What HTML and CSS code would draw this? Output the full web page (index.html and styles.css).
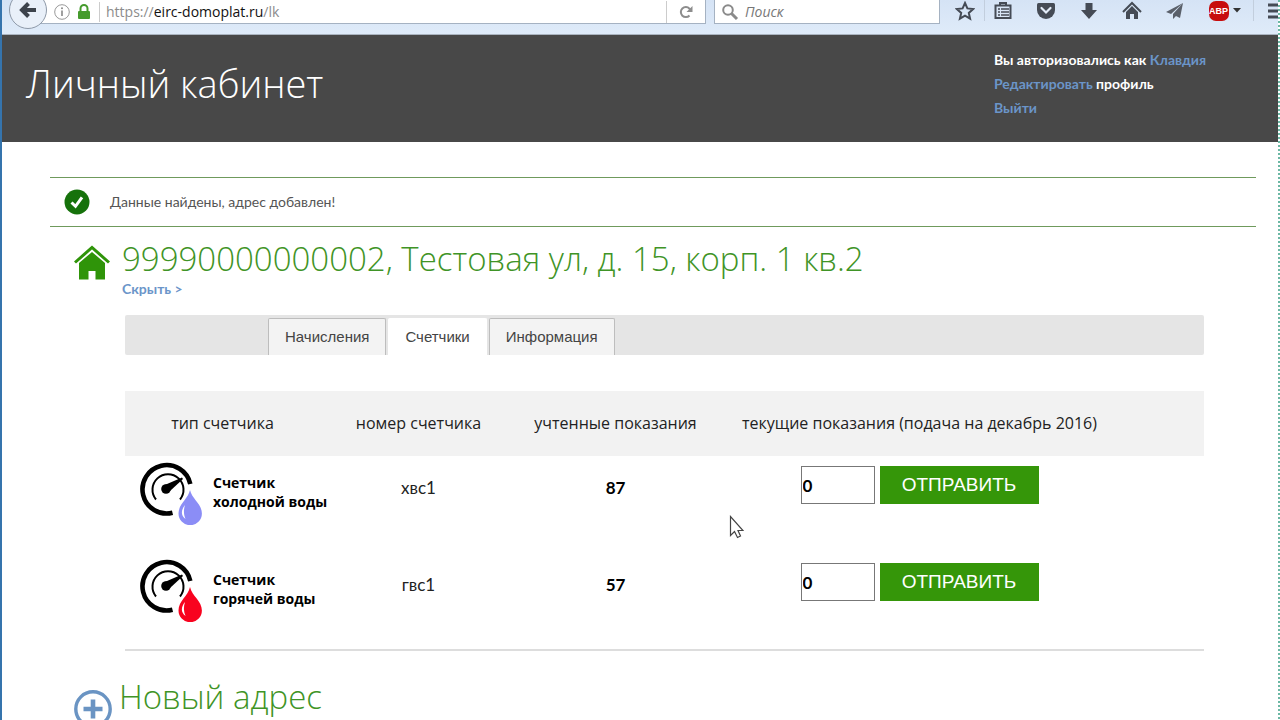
FILE: index.html
```html
<!DOCTYPE html>
<html lang="ru">
<head>
<meta charset="utf-8">
<title>Личный кабинет</title>
<link rel="stylesheet" href="styles.css">
</head>
<body>
<div class="window">
  <div class="toolbar">
    <button class="back" type="button" aria-label="Назад">
      <svg width="20" height="20" viewBox="0 0 20 20"><path d="M18 10H5M10.500 3.500L4 10l6.500 6.500" fill="none" stroke="#3d434c" stroke-width="4"/></svg>
    </button>
    <div class="urlbar">
      <svg width="16" height="16" viewBox="0 0 16 16"><circle cx="8" cy="8" r="7.300" fill="none" stroke="#999"/><path d="M8 6.500V12" stroke="#888" stroke-width="1.600"/><circle cx="8" cy="4.300" r="1" fill="#888"/></svg>
      <svg class="lock" width="14" height="16" viewBox="0 0 14 16"><path d="M3.500 8V4.500a3.500 3.500 0 0 1 7 0V8" fill="none" stroke="#469b2d" stroke-width="2"/><rect x="1" y="7" width="12" height="8" rx="1" fill="#469b2d"/></svg>
      <div class="url">https://<span class="host">eirc-domoplat.ru</span>/lk</div>
      <button class="reload" type="button" aria-label="Обновить">
        <svg width="16" height="16" viewBox="0 0 16 16"><path d="M11.500 11.500A5 5 0 1 1 11.500 4.700L13 6.500" fill="none" stroke="#8d8d8d" stroke-width="2"/><path d="M14.500 2v6h-6z" fill="#8d8d8d"/></svg>
      </button>
    </div>
    <label class="search">
      <svg width="18" height="18" viewBox="0 0 18 18"><circle cx="7" cy="7" r="4.800" fill="none" stroke="#8a8a8a" stroke-width="2"/><path d="M10.500 10.500L16 16" stroke="#8a8a8a" stroke-width="3"/></svg>
      <input type="text" placeholder="Поиск" aria-label="Поиск">
    </label>
    <div class="tools">
      <button type="button" class="tool star" aria-label="Закладка"><svg width="20" height="20" viewBox="0 0 20 20"><path d="M10 2l2.400 5.400 5.800.6-4.400 3.900 1.300 5.800L10 14.700l-5.100 3 1.300-5.800L1.800 8l5.800-.6z" fill="none" stroke="#454b55" stroke-width="2"/></svg></button>
      <button type="button" class="tool" aria-label="Список закладок"><svg width="20" height="20" viewBox="0 0 20 20"><path d="M7 4V2h6v2M2.500 4.500h15v12.500h-15z" fill="none" stroke="#454b55" stroke-width="2"/><path d="M5 8h2M8 8h8M5 11h2M8 11h8M5 14h2M8 14h8" stroke="#454b55" stroke-width="1.500"/></svg></button>
      <button type="button" class="tool" aria-label="Pocket"><svg width="20" height="20" viewBox="0 0 20 20"><path d="M1 3.500Q1 2 2.500 2h15Q19 2 19 3.500V9a9 9 0 0 1-18 0z" fill="#454b55"/><path d="M5.500 7l4.500 4.500L14.500 7" fill="none" stroke="#e3ecf8" stroke-width="2.200" stroke-linecap="round"/></svg></button>
      <button type="button" class="tool" aria-label="Загрузки"><svg width="20" height="20" viewBox="0 0 20 20"><path d="M6.500 2h7v7H18l-8 9-8-9h4.500z" fill="#454b55"/></svg></button>
      <button type="button" class="tool" aria-label="Домой"><svg width="20" height="20" viewBox="0 0 20 20"><path d="M1 11l9-9 9 9" fill="none" stroke="#454b55" stroke-width="2"/><path d="M4 11l6-6 6 6v7h-4v-5H8v5H4z" fill="#454b55"/></svg></button>
      <button type="button" class="tool" aria-label="Отправить ссылку"><svg width="20" height="20" viewBox="0 0 20 20"><path d="M18 2L1 11l5 2zM18 2L8 13v5l3-3 4 2z" fill="#5a606a"/></svg></button>
      <button type="button" class="tool abp" aria-label="Adblock Plus"><span class="abp-sign">ABP</span><svg width="8" height="5" viewBox="0 0 8 5"><path d="M0 0h8L4 4.500z" fill="#333"/></svg></button>
      <button type="button" class="tool menu" aria-label="Меню"><svg width="18" height="20" viewBox="0 0 18 20"><path d="M0 4h18M0 10h18M0 16h18" stroke="#454b55" stroke-width="3"/></svg></button>
    </div>
  </div>

  <header class="header">
    <h1 class="title">Личный кабинет</h1>
    <div class="user">
      <div>Вы авторизовались как <a href="#">Клавдия</a></div>
      <div><a href="#">Редактировать</a> профиль</div>
      <div><a href="#">Выйти</a></div>
    </div>
  </header>

  <main class="main">
    <div class="message">
      <svg width="26" height="26" viewBox="0 0 26 26"><circle cx="13" cy="13" r="12.500" fill="#16720b"/><path d="M7.500 13.500l4 3.800 6.500-9" fill="none" stroke="#fff" stroke-width="3"/></svg>
      <span>Данные найдены, адрес добавлен!</span>
    </div>

    <section class="address">
      <svg class="house" width="36" height="36" viewBox="0 0 36 36"><path d="M1 17.500L18 2.500l17 15" fill="none" stroke="#2f9409" stroke-width="3"/><path d="M18 7l13 11v16.500h-9.500V26h-7v8.500H5V18z" fill="#2f9409"/></svg>
      <div class="address-head">
        <h2 class="heading">99990000000002, Тестовая ул, д. 15, корп. 1 кв.2</h2>
        <a class="toggle" href="#">Скрыть &gt;</a>
      </div>
    </section>

    <div class="details">
      <nav class="tabs">
        <button class="tab" type="button">Начисления</button>
        <button class="tab tab-active" type="button">Счетчики</button>
        <button class="tab" type="button">Информация</button>
      </nav>

      <table class="meters">
        <colgroup><col class="col-type"><col class="col-num"><col class="col-num"><col></colgroup>
        <thead>
          <tr><th>тип счетчика</th><th>номер счетчика</th><th>учтенные показания</th><th class="current">текущие показания (подача на декабрь 2016)</th></tr>
        </thead>
        <tbody>
          <tr>
            <td><div class="type">
              <svg class="cold" width="64" height="64" viewBox="0 0 64 64"><use href="#gauge"/></svg>
              <span>Счетчик<br>холодной воды</span></div></td>
            <td class="number">хвс1</td>
            <td class="value">87</td>
            <td class="current"><form class="send"><input type="text" value="0" aria-label="Показания холодной воды"><button type="button">ОТПРАВИТЬ</button></form></td>
          </tr>
          <tr>
            <td><div class="type">
              <svg class="hot" width="64" height="64" viewBox="0 0 64 64"><use href="#gauge"/></svg>
              <span>Счетчик<br>горячей воды</span></div></td>
            <td class="number">гвс1</td>
            <td class="value">57</td>
            <td class="current"><form class="send"><input type="text" value="0" aria-label="Показания горячей воды"><button type="button">ОТПРАВИТЬ</button></form></td>
          </tr>
        </tbody>
      </table>
    </div>

    <section class="new-address">
      <svg class="plus" width="38" height="38" viewBox="0 0 38 38"><circle cx="19" cy="19" r="17.200" fill="none" stroke="#6a94c3" stroke-width="3.400"/><path d="M19 9.500v19M9.500 19h19" stroke="#6a94c3" stroke-width="4.600"/></svg>
      <div class="address-head">
        <h2 class="heading">Новый адрес</h2>
        <a class="toggle" href="#">Добавить &gt;</a>
      </div>
    </section>
  </main>
</div>

<svg class="pointer" width="15" height="24" viewBox="0 0 15 24"><path d="M1.500 1.500v19l4-4 3 6 3-1.500-2.500-5.500h5z" fill="#fff" stroke="#444" stroke-width="1.200"/></svg>

<svg class="defs" width="0" height="0">
  <symbol id="gauge" viewBox="0 0 64 64">
    <path d="M33.500 51.800A24.200 24.200 0 1 1 51.300 23" fill="none" stroke="#000" stroke-width="4.600"/>
    <path d="M17 38.500A15.500 15.500 0 1 1 41 38.500" fill="none" stroke="#000" stroke-width="2"/>
    <path d="M24.500 24.500L43 16.500l1 1.500-13 12z" fill="#000"/>
    <circle cx="27" cy="28" r="4.800" fill="#000"/>
    <path d="M51 29C49 38 39.500 43 39.500 52.500a11.700 11.700 0 0 0 23.400 0C62.900 43 53 38 51 29z" fill="currentColor"/>
    <path d="M46 44c-4 5-4.500 10 .5 14-2-5-2-9-.5-14z" fill="#fff"/>
  </symbol>
</svg>
</body>
</html>
```
FILE: styles.css
```css
* { box-sizing: border-box; }
html { height: 100%; overflow: hidden; }
body {
  margin: 0;
  height: 100%;
  overflow: hidden;
  background: #fff;
  color: #222;
  font: 16px/20px Lato, "Open Sans", sans-serif;
}
a { color: #6b95c9; text-decoration: none; }
button { font: inherit; border: 0; padding: 0; background: none; cursor: pointer; }
h1, h2 { margin: 0; font-family: "Open Sans", sans-serif; font-weight: 300; }
svg { display: block; flex: none; }

.window { min-height: 100%; border-left: 2px solid #3574ad; border-right: 2px dotted #6cb8a4; }

.toolbar {
  display: flex;
  align-items: flex-start;
  height: 35px;
  padding-left: 7px;
  overflow: hidden;
  background: linear-gradient(#d5e3f5, #dfebf9);
  border-bottom: 1px solid #aab4c0;
}
.back {
  position: relative;
  z-index: 1;
  flex: none;
  display: grid;
  place-items: center;
  width: 38px;
  height: 38px;
  margin: -9px -20px 0 0;
  border: 1px solid #8e99a8;
  border-radius: 50%;
  background: #e9f0f9;
}
.urlbar, .search {
  display: flex;
  align-items: center;
  height: 24px;
  background: #fff;
  border: solid #a5b2c2;
  border-width: 0 1px 1px;
}
.urlbar { flex: 1; padding-left: 26px; font: 14px/20px "Open Sans", sans-serif; color: #8c8c8c; }
.lock { margin: 0 8px 0 7px; }
.url { flex: 1; padding-left: 6px; border-left: 1px solid #ccc; }
.host { color: #111; }
.reload { display: grid; place-items: center; width: 39px; height: 22px; border-left: 1px solid #ccc; }
.search { width: 226px; margin-left: 8px; padding-left: 6px; gap: 6px; }
.search input {
  min-width: 0;
  flex: 1;
  border: 0;
  padding: 0;
  outline: 0;
  font: italic 14px/20px "Open Sans", sans-serif;
}
.search input::placeholder { color: #777; }
.tools { display: flex; flex: none; padding-left: 5px; }
.tool { display: flex; align-items: center; justify-content: center; width: 43px; height: 21px; }
.star { border-right: 1px solid #c2cedd; width: 40px; margin-right: -4px; }
.abp { gap: 4px; width: 58px; border-right: 1px solid #c2cedd; }
.abp-sign {
  width: 20px;
  height: 20px;
  border-radius: 7px;
  background: #c70d0d;
  color: #fff;
  font: bold 9px/20px "Liberation Sans", sans-serif;
  text-align: center;
}
.menu { width: 24px; padding-left: 14px; justify-content: flex-start; overflow: hidden; }

.header {
  display: flex;
  justify-content: space-between;
  height: 107px;
  padding: 13px 66px 0 24px;
  background: #484848;
  color: #fff;
}
.title { font-size: 38px; line-height: 70px; }
.user { width: 218px; font-size: 14px; font-weight: 700; line-height: 24px; white-space: nowrap; }

.main { padding: 35px 22px 0 48px; }
.message {
  display: flex;
  align-items: center;
  gap: 20px;
  height: 50px;
  padding-left: 14px;
  border: solid #6f9a5c;
  border-width: 1px 0;
  color: #555;
  font-size: 14px;
}
.address, .new-address { display: flex; align-items: flex-start; padding-left: 24px; }
.address { gap: 12px; padding-top: 10px; }
.house { margin-top: 8px; }
.heading { font-size: 33px; line-height: 44px; color: #3f9426; white-space: nowrap; }
.toggle { display: block; font-size: 14px; font-weight: 700; line-height: 16px; }

.details { margin: 18px 52px 0 75px; }
.tabs { display: flex; align-items: flex-end; height: 40px; padding-left: 143px; gap: 2px; background: #e5e5e5; border-radius: 2px; }
.tab {
  height: 37px;
  padding: 0 16px;
  border: 1px solid #bdbdbd;
  border-bottom: 0;
  border-radius: 2px 2px 0 0;
  background: #f3f3f3;
  color: #444;
  font: 15px/36px "Liberation Sans", sans-serif;
}
.tab-active { border-color: #fff; background: #fff; }

.meters { width: 100%; margin-top: 36px; border-collapse: collapse; table-layout: fixed; border-bottom: 2px solid #ddd; }
.col-type { width: 195px; }
.col-num { width: 197px; }
.meters th { height: 65px; padding: 0 0 2px; background: #f2f2f2; font: 16px/20px "Open Sans", sans-serif; white-space: nowrap; }
.meters td { height: 97px; padding: 0; vertical-align: top; }
.meters .current { padding-right: 79px; }
.type { display: flex; gap: 10px; padding: 5px 0 0 14px; font: bold 14px/19px "Open Sans", sans-serif; color: #000; white-space: nowrap; }
.type span { padding-top: 12px; }
.cold { color: #8b8df6; }
.hot { color: #f8031f; }
.meters .number, .meters .value { padding-top: 22px; text-align: center; font-size: 17px; }
.value { font-weight: 700; color: #000; }
.send { display: flex; justify-content: center; gap: 5px; margin: 0; padding-top: 10px; }
.send input {
  width: 74px;
  height: 38px;
  padding: 0 0 0 1px;
  border: 1px solid #777;
  border-radius: 0;
  font: bold 17px/20px Lato, sans-serif;
}
.send button { width: 159px; height: 38px; background: #359609; color: #fff; font: 19px/38px "Liberation Sans", sans-serif; }

.new-address { gap: 7px; padding-top: 24px; }
.plus { margin-top: 15px; }
.pointer { position: absolute; left: 729px; top: 515px; }
.defs { position: absolute; }
```
